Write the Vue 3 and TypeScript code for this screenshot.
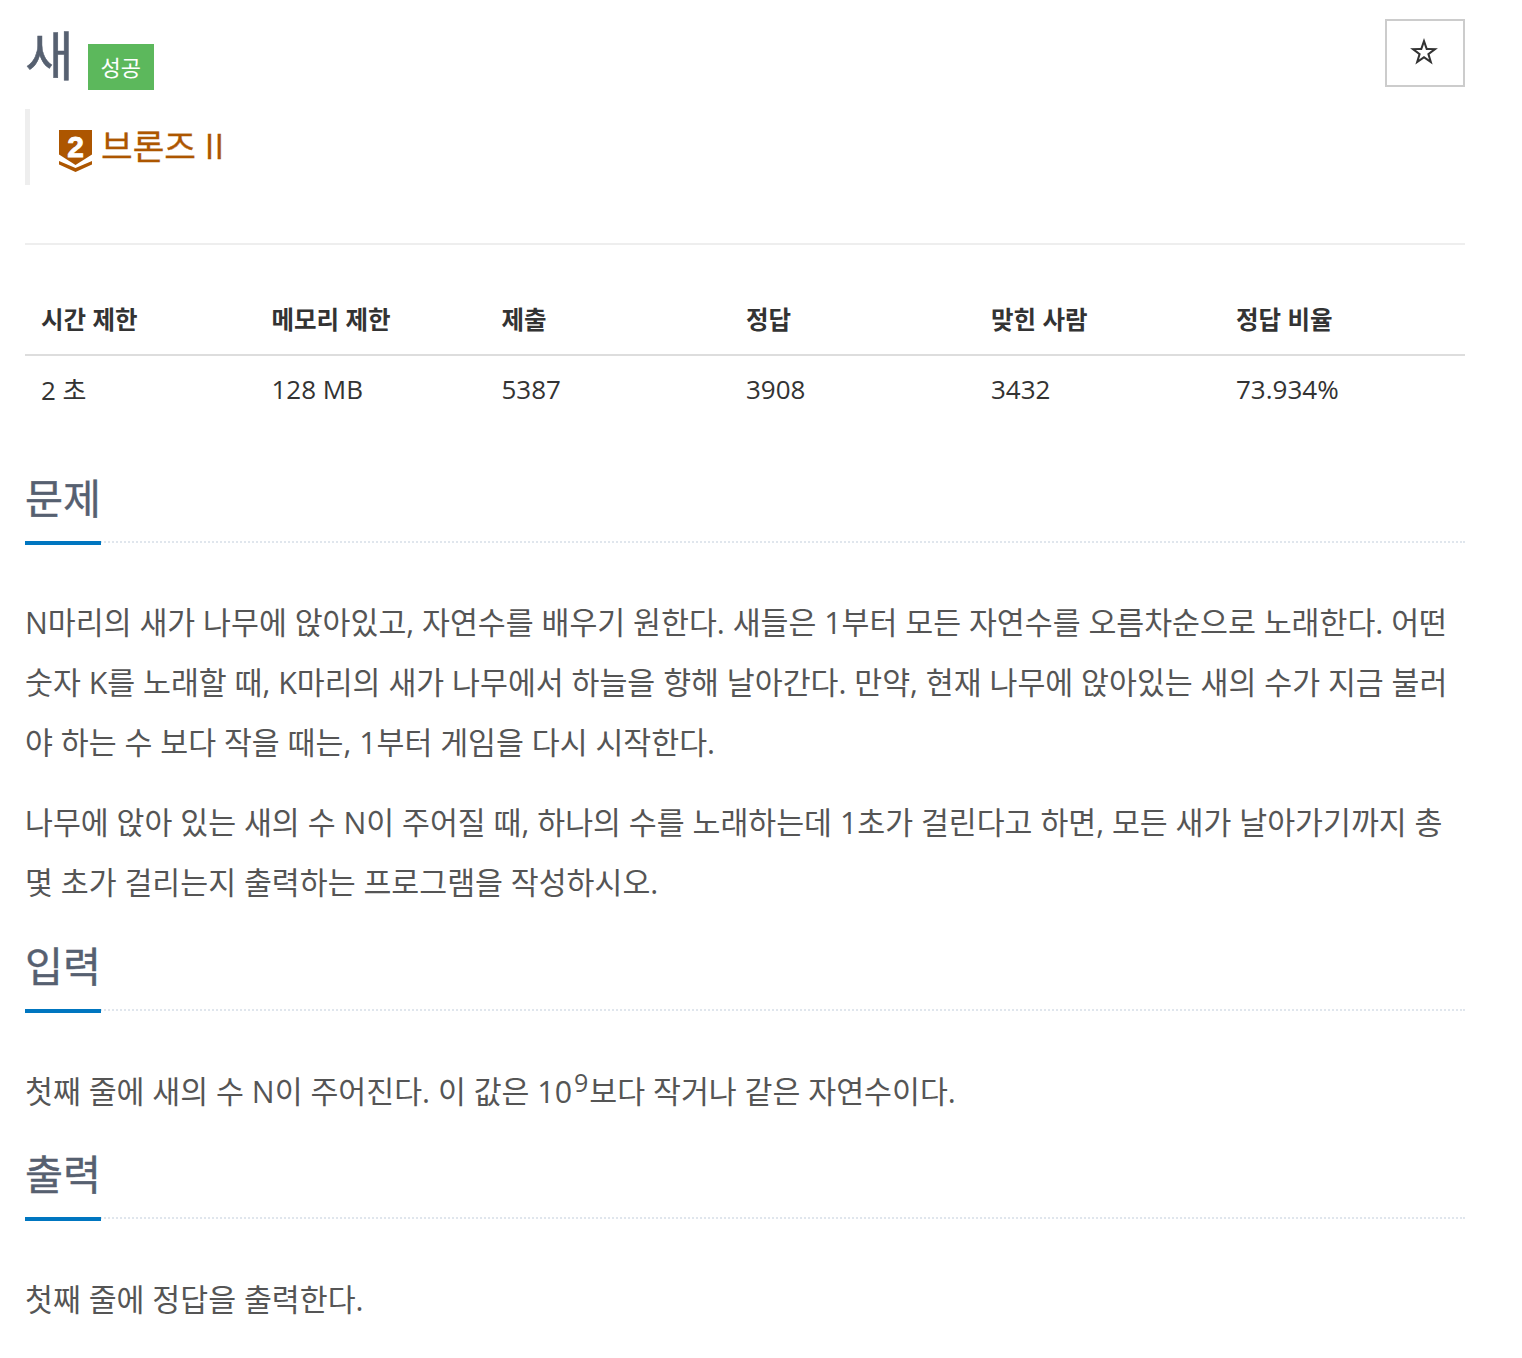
<script setup lang="ts">
const heads = [
  { label: '시간 제한', value: '2 초', width: 230.5 },
  { label: '메모리 제한', value: '128 MB', width: 230 },
  { label: '제출', value: '5387', width: 244.5 },
  { label: '정답', value: '3908', width: 245 },
  { label: '맞힌 사람', value: '3432', width: 245 },
  { label: '정답 비율', value: '73.934%', width: 245 },
]
</script>

<template>
  <main class="page">
    <header class="title-row">
      <div class="title-left">
        <h1 class="title">새</h1>
        <span class="badge">성공</span>
      </div>
      <button class="star" type="button" aria-label="즐겨찾기">
        <svg class="star-icon" width="28" height="28" viewBox="1.6 1.5 24.8 24.8">
          <path fill-rule="evenodd" fill="#333" d="M14 1.500L17.060 10.290 26.360 10.480 18.950 16.110 21.640 25.020 14 19.700 6.360 25.020 9.050 16.110 1.640 10.480 10.940 10.290zM14 6.960L12.230 12.060 6.830 12.170 11.130 15.430 9.570 20.600 14 17.520 18.430 20.600 16.870 15.430 21.170 12.170 15.770 12.060z" />
        </svg>
      </button>
    </header>

    <blockquote class="tier">
      <svg class="tier-icon" width="34" height="44" viewBox="0 0 34 44">
        <path d="M0 0h33v24.500L16.500 35 0 24.500z" fill="#ad5600" />
        <path d="M0 31l16.500 7L33 31v3.500L16.500 42 0 34.500z" fill="#ad5600" />
        <text x="16.500" y="27" text-anchor="middle" class="tier-num">2</text>
      </svg>
      <span class="tier-text">브론즈 II</span>
    </blockquote>

    <hr class="rule" />

    <table class="stats">
      <thead>
        <tr>
          <th v-for="h in heads" :key="h.label" :style="{ width: h.width + 'px' }">{{ h.label }}</th>
        </tr>
      </thead>
      <tbody>
        <tr>
          <td v-for="h in heads" :key="h.label">{{ h.value }}</td>
        </tr>
      </tbody>
    </table>

    <section class="section first">
      <div class="head"><h2>문제</h2></div>
      <p>N마리의 새가 나무에 앉아있고, 자연수를 배우기 원한다. 새들은 1부터 모든 자연수를 오름차순으로 노래한다. 어떤 숫자 K를 노래할 때, K마리의 새가 나무에서 하늘을 향해 날아간다. 만약, 현재 나무에 앉아있는 새의 수가 지금 불러야 하는 수 보다 작을 때는, 1부터 게임을 다시 시작한다.</p>
      <p>나무에 앉아 있는 새의 수 N이 주어질 때, 하나의 수를 노래하는데 1초가 걸린다고 하면, 모든 새가 날아가기까지 총 몇 초가 걸리는지 출력하는 프로그램을 작성하시오.</p>
    </section>

    <section class="section">
      <div class="head"><h2>입력</h2></div>
      <p>첫째 줄에 새의 수 N이 주어진다. 이 값은 10<sup>9</sup>보다 작거나 같은 자연수이다.</p>
    </section>

    <section class="section">
      <div class="head"><h2>출력</h2></div>
      <p>첫째 줄에 정답을 출력한다.</p>
    </section>
  </main>
</template>

<style>
html, body { margin: 0; background: #fff; }
</style>

<style scoped>
.page {
  box-sizing: border-box;
  width: 1440px;
  margin-left: 25px;
  height: 1358px;
  overflow: hidden;
  font-family: "Open Sans", "Noto Sans CJK KR", sans-serif;
  color: #555;
}
.title-row {
  display: flex;
  justify-content: space-between;
  align-items: flex-start;
  height: 109px;
  padding-top: 19px;
  box-sizing: border-box;
}
.title-left { display: flex; align-items: flex-start; gap: 14px; }
.title {
  margin: 3px 0 0;
  font-size: 53px;
  font-weight: 400;
  line-height: 68px;
  color: #566070;
  -webkit-text-stroke: 0.5px #566070;
}
.badge {
  margin-top: 25px;
  width: 66px;
  height: 46px;
  box-sizing: border-box;
  padding-bottom: 2px;
  background: #5cb85c;
  color: #fff;
  font-size: 22px;
  display: flex;
  align-items: center;
  justify-content: center;
}
.star {
  width: 80px;
  height: 68px;
  background: #fff;
  border: 2px solid #ccc;
  padding: 0;
  display: flex;
  align-items: center;
  justify-content: center;
}
.star-icon { margin: 0 2px 2px 0; }
.tier {
  margin: 0;
  height: 76px;
  border-left: 5px solid #eee;
  padding-left: 29px;
  display: flex;
  align-items: center;
  gap: 8px;
}
.tier-icon { margin-top: 10px; }
.tier-num { font: 700 30px "Liberation Sans", sans-serif; fill: #fff; stroke: #fff; stroke-width: 0.8px; }
.tier-text {
  font-size: 34.400px;
  color: #ad5600;
  line-height: 1;
  margin-bottom: 2px;
  -webkit-text-stroke: 0.3px #ad5600;
}
.rule {
  margin: 58px 0 0;
  border: 0;
  border-top: 2px solid #eee;
}
.stats {
  margin-top: 36px;
  border-collapse: collapse;
  table-layout: fixed;
  width: 1440px;
  font-size: 26px;
}
.stats th {
  text-align: left;
  font-weight: 700;
  font-size: 24.500px;
  color: #333;
  padding: 1px 16px 0;
  height: 74px;
  box-sizing: border-box;
  border-bottom: 2px solid #ddd;
}
.stats td {
  padding: 0 16px 2px;
  height: 68px;
  box-sizing: border-box;
  color: #333;
}
.section { margin-top: 22px; }
.section.first { margin-top: 45px; }
.section.first + .section { margin-top: 23px; }
.head {
  border-bottom: 2px dotted #e0e6ed;
  height: 75px;
  box-sizing: border-box;
}
.head h2 {
  display: inline-block;
  margin: 0 0 -2px;
  height: 77px;
  box-sizing: border-box;
  font-size: 41.300px;
  font-weight: 400;
  line-height: 60px;
  color: #566070;
  -webkit-text-stroke: 0.4px #566070;
  border-bottom: 4px solid #0076c0;
}
.section p {
  margin: 0;
  font-size: 30.330px;
  line-height: 60px;
  padding-top: 20px;
}
.section .head + p { padding-top: 51px; }
.section.first .head + p { padding-top: 50px; }
sup { font-size: 25px; line-height: 0; margin: 0 1px 0 2px; }
</style>
